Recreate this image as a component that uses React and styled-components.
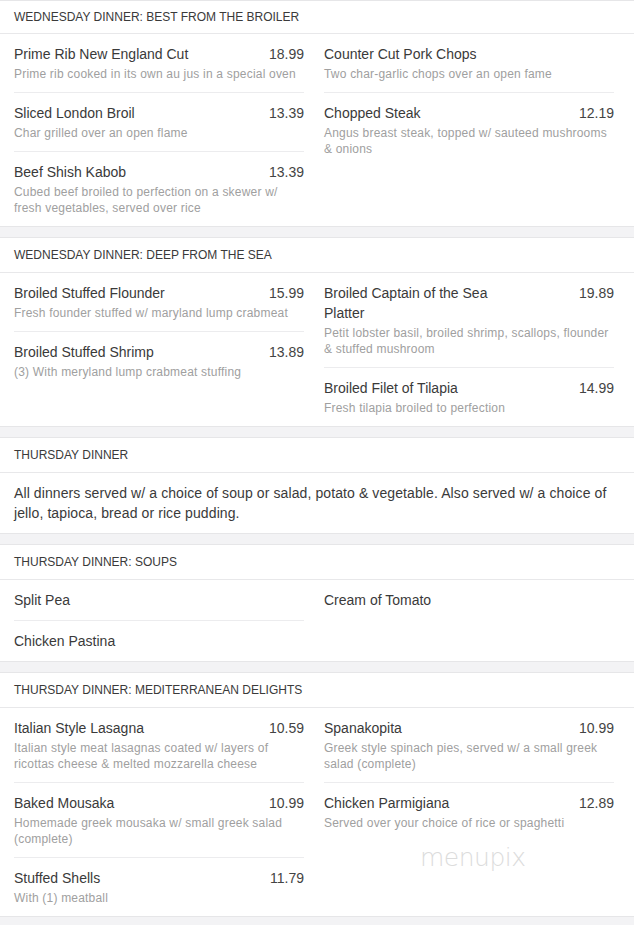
import React from "react";
import styled, { createGlobalStyle } from "styled-components";

const GlobalStyle = createGlobalStyle`
    html, body {
        margin: 0;
        padding: 0;
        background: #f3f3f5;
        font-family: "Liberation Sans", Arial, sans-serif;
    }
`;

const Page = styled.div`
    position: relative;
    width: 634px;
    padding-bottom: 10px;
`;

const Section = styled.section`
    background: #ffffff;
    border-top: 1px solid #e6e6e8;
    border-bottom: 1px solid #e6e6e8;
    margin-bottom: 10px;
`;

const Heading = styled.h2`
    margin: 0;
    padding: ${props => (props.first ? "9px 14px 9px" : "10px 14px 10px")};
    font-size: 12px;
    line-height: 14px;
    font-weight: 400;
    color: #3a3a3a;
    text-transform: uppercase;
    border-bottom: 1px solid #e8e8ea;
`;

const Note = styled.p`
    margin: 0;
    padding: 10px 20px 10px 14px;
    font-size: 14px;
    line-height: 20px;
    letter-spacing: 0.1px;
    color: #3a3a3a;
`;

const Columns = styled.div`
    display: grid;
    grid-template-columns: 1fr 1fr;
    column-gap: 20px;
    padding: 0 20px 0 14px;
`;

const Column = styled.div`
    display: flex;
    flex-direction: column;
`;

const Item = styled.div`
    padding: 10px 0;
    & + & {
        border-top: 1px solid #ececee;
    }
`;

const TitleRow = styled.div`
    display: flex;
    justify-content: space-between;
    align-items: flex-start;
    font-size: 14px;
    line-height: 20px;
    color: #3a3a3a;
`;

const Title = styled.span`
    max-width: 70%;
`;

const Price = styled.span`
    color: #444;
`;

const Desc = styled.div`
    margin-top: 2px;
    font-size: 12px;
    line-height: 16px;
    letter-spacing: 0.2px;
    color: #a0a0a0;
`;

const Watermark = styled.div`
    position: absolute;
    left: 420px;
    top: 843px;
    font-family: "DejaVu Sans", sans-serif;
    font-size: 25px;
    font-weight: 200;
    letter-spacing: -0.5px;
    color: #dcdcdc;
    pointer-events: none;
`;

const menu = [
    {
        title: "Wednesday Dinner: Best from the Broiler",
        columns: [
            [
                { name: "Prime Rib New England Cut", price: "18.99", desc: "Prime rib cooked in its own au jus in a special oven" },
                { name: "Sliced London Broil", price: "13.39", desc: "Char grilled over an open flame" },
                { name: "Beef Shish Kabob", price: "13.39", desc: "Cubed beef broiled to perfection on a skewer w/ fresh vegetables, served over rice" },
            ],
            [
                { name: "Counter Cut Pork Chops", desc: "Two char-garlic chops over an open fame" },
                { name: "Chopped Steak", price: "12.19", desc: "Angus breast steak, topped w/ sauteed mushrooms & onions" },
            ],
        ],
    },
    {
        title: "Wednesday Dinner: Deep from the Sea",
        columns: [
            [
                { name: "Broiled Stuffed Flounder", price: "15.99", desc: "Fresh founder stuffed w/ maryland lump crabmeat" },
                { name: "Broiled Stuffed Shrimp", price: "13.89", desc: "(3)  With meryland lump crabmeat stuffing" },
            ],
            [
                { name: "Broiled Captain of the Sea Platter", price: "19.89", desc: "Petit lobster basil, broiled shrimp, scallops, flounder & stuffed mushroom" },
                { name: "Broiled Filet of Tilapia", price: "14.99", desc: "Fresh tilapia broiled to perfection" },
            ],
        ],
    },
    {
        title: "Thursday Dinner",
        note: "All dinners served w/ a choice of soup or salad, potato & vegetable. Also served w/ a choice of jello, tapioca, bread or rice pudding.",
    },
    {
        title: "Thursday Dinner: Soups",
        columns: [
            [{ name: "Split Pea" }, { name: "Chicken Pastina" }],
            [{ name: "Cream of Tomato" }],
        ],
    },
    {
        title: "Thursday Dinner: Mediterranean Delights",
        columns: [
            [
                { name: "Italian Style Lasagna", price: "10.59", desc: "Italian style meat lasagnas coated w/ layers of ricottas cheese & melted mozzarella cheese" },
                { name: "Baked Mousaka", price: "10.99", desc: "Homemade greek mousaka w/ small greek salad (complete)" },
                { name: "Stuffed Shells", price: "11.79", desc: "With (1) meatball" },
            ],
            [
                { name: "Spanakopita", price: "10.99", desc: "Greek style spinach pies, served w/ a small greek salad (complete)" },
                { name: "Chicken Parmigiana", price: "12.89", desc: "Served over your choice of rice or spaghetti" },
            ],
        ],
    },
];

const MenuItem = ({ name, price, desc }) => (
    <Item>
        <TitleRow>
            <Title>{name}</Title>
            {price && <Price>{price}</Price>}
        </TitleRow>
        {desc && <Desc>{desc}</Desc>}
    </Item>
);

export default function App() {
    return (
        <Page>
            <GlobalStyle />
            {menu.map((section, i) => (
                <Section key={section.title}>
                    <Heading first={i === 0}>{section.title}</Heading>
                    {section.note && <Note>{section.note}</Note>}
                    {section.columns && (
                        <Columns>
                            {section.columns.map((col, c) => (
                                <Column key={c}>
                                    {col.map(item => (
                                        <MenuItem key={item.name} {...item} />
                                    ))}
                                </Column>
                            ))}
                        </Columns>
                    )}
                </Section>
            ))}
            <Watermark>menupix</Watermark>
        </Page>
    );
}
